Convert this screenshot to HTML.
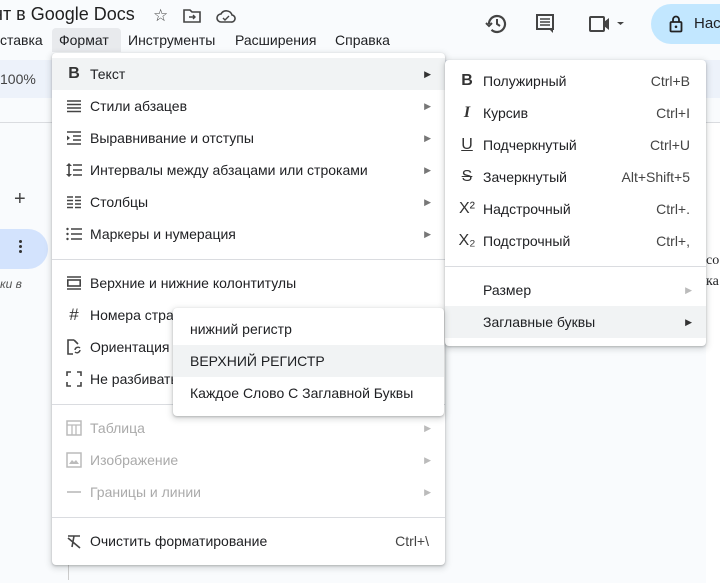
<!DOCTYPE html>
<html><head><meta charset="utf-8"><style>
*{margin:0;padding:0;box-sizing:border-box}
body{width:720px;height:572px;overflow:hidden;background:#f9fbfd;font-family:"Liberation Sans",sans-serif;color:#202124;position:relative;font-size:14px}
.abs{position:absolute}
.menu{position:absolute;background:#fff;border-radius:4px;box-shadow:0 2px 6px 2px rgba(60,64,67,.15),0 1px 2px rgba(60,64,67,.3)}
.it{position:absolute;left:0;right:0;height:32px;line-height:32px;font-size:14px;color:#202124}
.it .ic{position:absolute;left:12px;top:0;width:20px;text-align:center;font-size:16px;color:#333}
.it svg.ic{top:7px;width:18px;height:18px;left:13px}
.it .t{position:absolute;left:38px}
.it .ar{position:absolute;right:14px;font-size:9px;color:#777}
.it .sc{position:absolute;right:16px;color:#444}
.hl{background:#f1f3f4}
.dis{color:#aaa}
.div{position:absolute;left:0;right:0;height:1px;background:#dadce0}
</style></head><body>
<div class="abs" style="left:-7px;top:4px;font-size:18px;color:#1f1f1f">нт в Google Docs</div>
<div class="abs" style="left:153px;top:6px;font-size:17px;color:#444">☆</div>
<svg class="abs" style="left:183px;top:9px" width="18" height="14" viewBox="0 0 18 14"><path d="M1 1h6l2 2h8v10H1z" fill="none" stroke="#444" stroke-width="1.6"/><path d="M6 8h6M10 6l2 2-2 2" stroke="#444" stroke-width="1.4" fill="none"/></svg>
<svg class="abs" style="left:216px;top:9px" width="20" height="14" viewBox="0 0 20 14"><path d="M5 13a4 4 0 0 1 0-8 6 6 0 0 1 11 1 3.5 3.5 0 0 1-1 7z" fill="none" stroke="#444" stroke-width="1.6"/><path d="M7 9l2 2 4-4" stroke="#444" stroke-width="1.4" fill="none"/></svg>
<svg class="abs" style="left:484px;top:12px" width="24" height="24" viewBox="0 0 24 24"><path d="M5 12a8 8 0 1 1 2.5 5.8" fill="none" stroke="#444" stroke-width="2.2"/><path d="M2 11l3 3 3-3" fill="none" stroke="#444" stroke-width="2"/><path d="M13 7v5l3 2" fill="none" stroke="#444" stroke-width="2"/></svg>
<svg class="abs" style="left:535px;top:13px" width="20" height="22" viewBox="0 0 20 22"><path d="M2 2h16v14H2z" fill="none" stroke="#444" stroke-width="2"/><path d="M5 6h10M5 9h10M5 12h10" stroke="#444" stroke-width="1.6"/><path d="M14 16l4 4v-4" fill="#444"/></svg>
<svg class="abs" style="left:588px;top:15px" width="36" height="18" viewBox="0 0 36 18"><rect x="2" y="2" width="14" height="14" rx="1" fill="none" stroke="#444" stroke-width="2"/><path d="M16 7l5-4v12l-5-4z" fill="#444"/><path d="M29 7h7l-3.5 3z" fill="#444"/></svg>
<div class="abs" style="left:651px;top:4px;width:100px;height:40px;border-radius:20px;background:#c2e7ff"></div>
<svg class="abs" style="left:669px;top:15px" width="14" height="18" viewBox="0 0 14 18"><rect x="1.5" y="7" width="11" height="9.5" rx="1" fill="none" stroke="#222" stroke-width="1.8"/><path d="M4 7V4.5a3 3 0 0 1 6 0V7" fill="none" stroke="#222" stroke-width="1.8"/><circle cx="7" cy="11.8" r="1.3" fill="#222"/></svg>
<div class="abs" style="left:694px;top:15px;font-size:15px">Нас</div>
<div class="abs" style="left:0;top:32px;font-size:14px">ставка</div>
<div class="abs" style="left:52px;top:28px;width:69px;height:24px;background:#e8eaed;border-radius:4px 4px 0 0"></div>
<div class="abs" style="left:59px;top:32px;font-size:14px">Формат</div>
<div class="abs" style="left:128px;top:32px;font-size:14px">Инструменты</div>
<div class="abs" style="left:235px;top:32px;font-size:14px">Расширения</div>
<div class="abs" style="left:335px;top:32px;font-size:14px">Справка</div>
<div class="abs" style="left:-20px;top:60px;width:760px;height:38px;background:#edf2fa;border-radius:20px"></div>
<div class="abs" style="left:0;top:71px;font-size:14px;color:#444">100%</div>
<div class="abs" style="left:0;top:122px;width:720px;height:1px;background:#dadce0"></div>
<div class="abs" style="left:14px;top:188px;font-size:20px;color:#444">+</div>
<div class="abs" style="left:-20px;top:229px;width:68px;height:40px;border-radius:20px;background:#d3e3fd"></div>
<div class="abs" style="left:19px;top:240px;width:3px;height:3px;background:#333;border-radius:50%;box-shadow:0 5px 0 #333,0 10px 0 #333"></div>
<div class="abs" style="left:0;top:277px;font-size:12px;font-style:italic;color:#555">ки в</div>
<div class="abs" style="left:68px;top:540px;width:1px;height:40px;background:#ccc"></div>
<div class="abs" style="left:706px;top:123px;width:14px;height:460px;background:#fff"></div>
<div class="abs" style="left:706px;top:253px;font-family:'Liberation Serif',serif;font-size:14px">со</div>
<div class="abs" style="left:706px;top:274px;font-family:'Liberation Serif',serif;font-size:14px">ка</div>

<div class="menu" style="left:52px;top:53px;width:393px;height:512px">
 <div class="it hl" style="top:5px"><span class="ic" style="font-weight:bold">B</span><span class="t">Текст</span><span class="ar" style="color:#333">▶</span></div>
 <div class="it" style="top:37px"><svg class="ic" viewBox="0 0 18 18"><path d="M2 4h14M2 7.5h14M2 11h14M2 14.5h14" stroke="#444" stroke-width="1.6"/></svg><span class="t">Стили абзацев</span><span class="ar">▶</span></div>
 <div class="it" style="top:69px"><svg class="ic" viewBox="0 0 18 18"><path d="M2 3h14M8 7h8M8 11h8M2 15h14" stroke="#444" stroke-width="1.6"/><path d="M2 6.5l3 2.5-3 2.5z" fill="#444"/></svg><span class="t">Выравнивание и отступы</span><span class="ar">▶</span></div>
 <div class="it" style="top:101px"><svg class="ic" viewBox="0 0 18 18"><path d="M4 3v12M8 4h9M8 9h9M8 14h9" stroke="#444" stroke-width="1.6"/><path d="M1 5l3-3 3 3zM1 13l3 3 3-3z" fill="#444"/></svg><span class="t">Интервалы между абзацами или строками</span><span class="ar">▶</span></div>
 <div class="it" style="top:133px"><svg class="ic" viewBox="0 0 18 18"><path d="M2 4h6M2 7.5h6M2 11h6M2 14.5h6M10 4h6M10 7.5h6M10 11h6M10 14.5h6" stroke="#444" stroke-width="1.6"/></svg><span class="t">Столбцы</span><span class="ar">▶</span></div>
 <div class="it" style="top:165px"><svg class="ic" viewBox="0 0 18 18"><path d="M6 4h11M6 9h11M6 14h11" stroke="#444" stroke-width="1.6"/><circle cx="2.5" cy="4" r="1.2" fill="#444"/><circle cx="2.5" cy="9" r="1.2" fill="#444"/><circle cx="2.5" cy="14" r="1.2" fill="#444"/></svg><span class="t">Маркеры и нумерация</span><span class="ar">▶</span></div>
 <div class="div" style="top:206px"></div>
 <div class="it" style="top:214px"><svg class="ic" viewBox="0 0 18 18"><path d="M2 3h14M2 15h14" stroke="#444" stroke-width="1.6"/><rect x="2.8" y="6" width="12.4" height="6" fill="none" stroke="#444" stroke-width="1.6"/></svg><span class="t">Верхние и нижние колонтитулы</span></div>
 <div class="it" style="top:246px"><span class="ic" style="font-size:17px">#</span><span class="t">Номера страниц</span></div>
 <div class="it" style="top:278px"><svg class="ic" viewBox="0 0 18 18"><path d="M9 2H3v14h5M9 2l4 4" fill="none" stroke="#444" stroke-width="1.6"/><path d="M10 12a3 3 0 0 1 5-2M15 12a3 3 0 0 1-5 2" fill="none" stroke="#444" stroke-width="1.4"/></svg><span class="t">Ориентация страницы</span></div>
 <div class="it" style="top:310px"><svg class="ic" viewBox="0 0 18 18"><path d="M2 6V2h4M12 2h4v4M16 12v4h-4M6 16H2v-4" fill="none" stroke="#444" stroke-width="1.6"/></svg><span class="t">Не разбивать</span></div>
 <div class="div" style="top:351px"></div>
 <div class="it dis" style="top:359px"><svg class="ic" viewBox="0 0 18 18"><rect x="2" y="2" width="14" height="14" fill="none" stroke="#bbb" stroke-width="1.5"/><path d="M2 6h14M7 6v10M11 6v10" stroke="#bbb" stroke-width="1.3"/></svg><span class="t">Таблица</span><span class="ar" style="color:#bbb">▶</span></div>
 <div class="it dis" style="top:391px"><svg class="ic" viewBox="0 0 18 18"><rect x="2" y="2" width="14" height="14" fill="none" stroke="#bbb" stroke-width="1.5"/><path d="M4 13l3-4 2 2 2-2 3 4z" fill="#bbb"/></svg><span class="t">Изображение</span><span class="ar" style="color:#bbb">▶</span></div>
 <div class="it dis" style="top:423px"><svg class="ic" viewBox="0 0 18 18"><path d="M2 9h14" stroke="#bbb" stroke-width="1.6"/></svg><span class="t">Границы и линии</span><span class="ar" style="color:#bbb">▶</span></div>
 <div class="div" style="top:464px"></div>
 <div class="it" style="top:472px"><svg class="ic" viewBox="0 0 18 18"><path d="M3 4h12M9 4l-2 11M3 6l12 10" fill="none" stroke="#444" stroke-width="1.6"/></svg><span class="t">Очистить форматирование</span><span class="sc" style="right:16px">Ctrl+\</span></div>
</div>

<div class="menu" style="left:445px;top:60px;width:261px;height:286px">
 <div class="it" style="top:5px"><span class="ic" style="font-weight:bold">B</span><span class="t">Полужирный</span><span class="sc">Ctrl+B</span></div>
 <div class="it" style="top:37px"><span class="ic" style="font-style:italic;font-family:'Liberation Serif',serif;font-weight:bold">I</span><span class="t">Курсив</span><span class="sc">Ctrl+I</span></div>
 <div class="it" style="top:69px"><span class="ic" style="text-decoration:underline">U</span><span class="t">Подчеркнутый</span><span class="sc">Ctrl+U</span></div>
 <div class="it" style="top:101px"><span class="ic" style="text-decoration:line-through">S</span><span class="t">Зачеркнутый</span><span class="sc">Alt+Shift+5</span></div>
 <div class="it" style="top:133px"><span class="ic">X²</span><span class="t">Надстрочный</span><span class="sc">Ctrl+.</span></div>
 <div class="it" style="top:165px"><span class="ic">X₂</span><span class="t">Подстрочный</span><span class="sc">Ctrl+,</span></div>
 <div class="div" style="top:206px"></div>
 <div class="it" style="top:214px"><span class="t">Размер</span><span class="ar" style="color:#bbb">▶</span></div>
 <div class="it hl" style="top:246px"><span class="t">Заглавные буквы</span><span class="ar" style="color:#333">▶</span></div>
</div>

<div class="menu" style="left:173px;top:308px;width:271px;height:108px">
 <div class="it" style="top:5px"><span class="t" style="left:17px">нижний регистр</span></div>
 <div class="it hl" style="top:37px"><span class="t" style="left:17px">ВЕРХНИЙ РЕГИСТР</span></div>
 <div class="it" style="top:69px"><span class="t" style="left:17px">Каждое Слово С Заглавной Буквы</span></div>
</div>
</body></html>
